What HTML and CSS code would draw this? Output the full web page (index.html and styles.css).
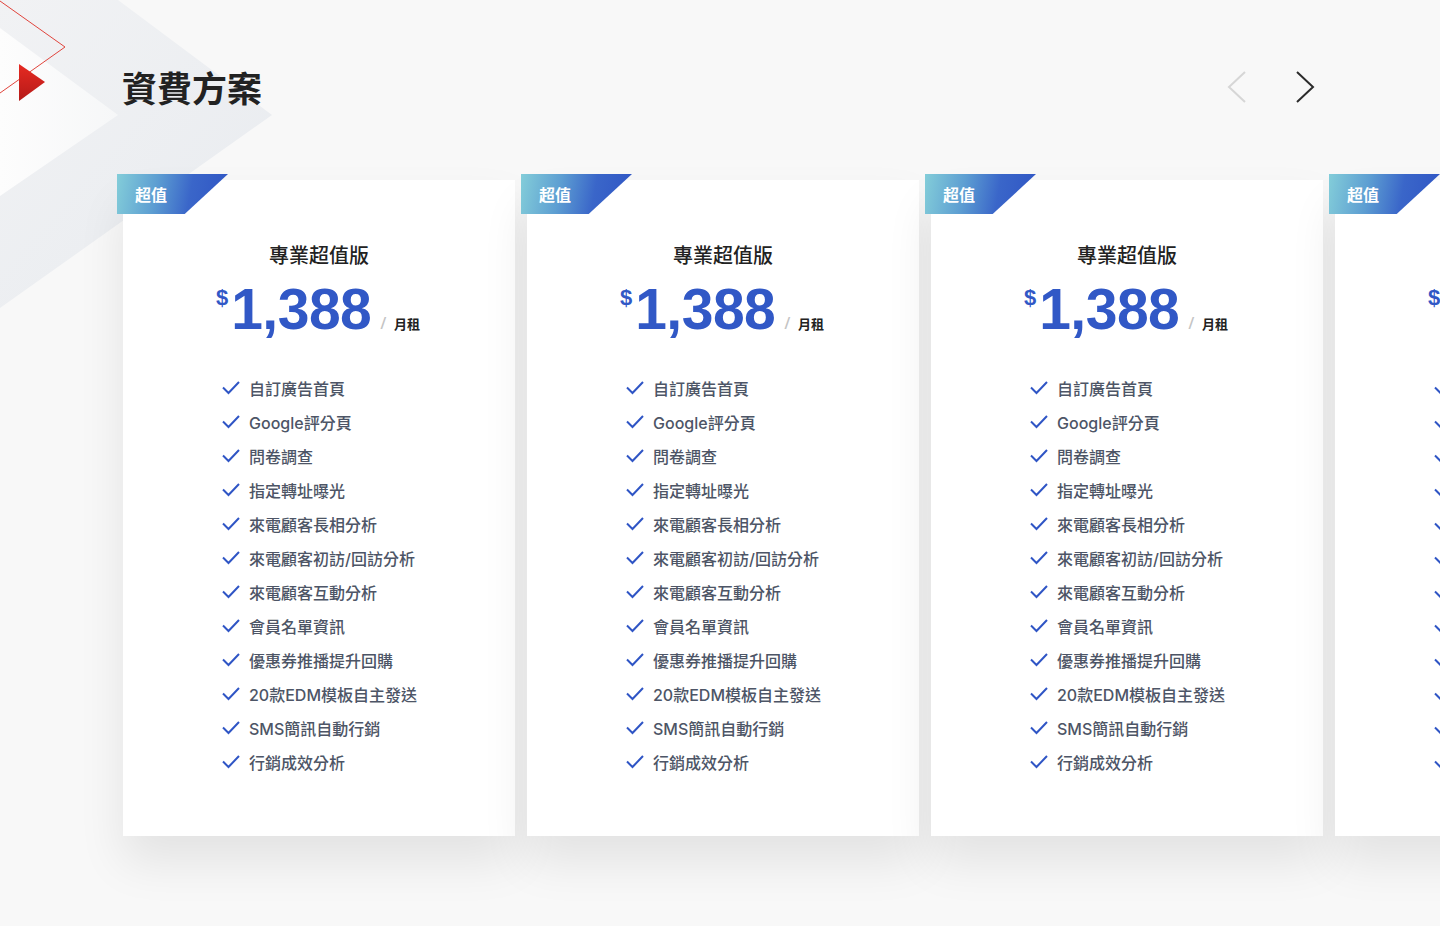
FILE: index.html
```html
<!DOCTYPE html>
<html lang="zh-Hant">
<head>
<meta charset="utf-8">
<title>資費方案</title>
<link rel="stylesheet" href="styles.css">
</head>
<body>
<svg class="deco" width="300" height="320" viewBox="0 0 300 320" aria-hidden="true">
  <defs>
    <linearGradient id="gBig" x1="0" y1="0" x2="1" y2="1">
      <stop offset="0" stop-color="#f1f2f4"/>
      <stop offset="1" stop-color="#e8ebef"/>
    </linearGradient>
    <linearGradient id="gIn" x1="0" y1="0" x2="1" y2="0">
      <stop offset="0" stop-color="#fdfdfd"/>
      <stop offset="1" stop-color="#f6f7f8"/>
    </linearGradient>
    <linearGradient id="gRed" x1="0" y1="0" x2="0" y2="1">
      <stop offset="0" stop-color="#e62a22"/>
      <stop offset="1" stop-color="#b51a18"/>
    </linearGradient>
  </defs>
  <polygon points="0,0 118,0 272,115 0,308" fill="url(#gBig)"/>
  <polygon points="0,28 118,115 0,196" fill="url(#gIn)"/>
  <polyline points="0,1 65,47 0,93" fill="none" stroke="#e0443c" stroke-width="1"/>
  <polygon points="19,64 45,82 19,101" fill="url(#gRed)"/>
</svg>

<main class="page">
  <header class="head">
    <h1 class="head-title">資費方案</h1>
    <nav class="head-nav">
      <button class="nav-btn nav-prev" aria-label="上一頁">
        <svg width="20" height="32" viewBox="0 0 20 32"><polyline points="18,1 2,16 18,31" fill="none" stroke="#d6d6d6" stroke-width="2"/></svg>
      </button>
      <button class="nav-btn nav-next" aria-label="下一頁">
        <svg width="20" height="32" viewBox="0 0 20 32"><polyline points="2,1 18,16 2,31" fill="none" stroke="#2b2b2b" stroke-width="2"/></svg>
      </button>
    </nav>
  </header>

  <section class="cards">
    <article class="card">
      <span class="badge">超值</span>
      <h2 class="card-title">專業超值版</h2>
      <div class="price"><span class="cur">$</span><span class="amt">1,388</span><span class="sep">/</span><span class="unit">月租</span></div>
      <ul class="feat">
        <li><svg class="chk" viewBox="0 0 18 14"><polyline points="1,6.5 6.5,12 17,1"/></svg>自訂廣告首頁</li>
        <li><svg class="chk" viewBox="0 0 18 14"><polyline points="1,6.5 6.5,12 17,1"/></svg>Google評分頁</li>
        <li><svg class="chk" viewBox="0 0 18 14"><polyline points="1,6.5 6.5,12 17,1"/></svg>問卷調查</li>
        <li><svg class="chk" viewBox="0 0 18 14"><polyline points="1,6.5 6.5,12 17,1"/></svg>指定轉址曝光</li>
        <li><svg class="chk" viewBox="0 0 18 14"><polyline points="1,6.5 6.5,12 17,1"/></svg>來電顧客長相分析</li>
        <li><svg class="chk" viewBox="0 0 18 14"><polyline points="1,6.5 6.5,12 17,1"/></svg>來電顧客初訪/回訪分析</li>
        <li><svg class="chk" viewBox="0 0 18 14"><polyline points="1,6.5 6.5,12 17,1"/></svg>來電顧客互動分析</li>
        <li><svg class="chk" viewBox="0 0 18 14"><polyline points="1,6.5 6.5,12 17,1"/></svg>會員名單資訊</li>
        <li><svg class="chk" viewBox="0 0 18 14"><polyline points="1,6.5 6.5,12 17,1"/></svg>優惠券推播提升回購</li>
        <li><svg class="chk" viewBox="0 0 18 14"><polyline points="1,6.5 6.5,12 17,1"/></svg>20款EDM模板自主發送</li>
        <li><svg class="chk" viewBox="0 0 18 14"><polyline points="1,6.5 6.5,12 17,1"/></svg>SMS簡訊自動行銷</li>
        <li><svg class="chk" viewBox="0 0 18 14"><polyline points="1,6.5 6.5,12 17,1"/></svg>行銷成效分析</li>
      </ul>
    </article>
    <article class="card">
      <span class="badge">超值</span>
      <h2 class="card-title">專業超值版</h2>
      <div class="price"><span class="cur">$</span><span class="amt">1,388</span><span class="sep">/</span><span class="unit">月租</span></div>
      <ul class="feat">
        <li><svg class="chk" viewBox="0 0 18 14"><polyline points="1,6.5 6.5,12 17,1"/></svg>自訂廣告首頁</li>
        <li><svg class="chk" viewBox="0 0 18 14"><polyline points="1,6.5 6.5,12 17,1"/></svg>Google評分頁</li>
        <li><svg class="chk" viewBox="0 0 18 14"><polyline points="1,6.5 6.5,12 17,1"/></svg>問卷調查</li>
        <li><svg class="chk" viewBox="0 0 18 14"><polyline points="1,6.5 6.5,12 17,1"/></svg>指定轉址曝光</li>
        <li><svg class="chk" viewBox="0 0 18 14"><polyline points="1,6.5 6.5,12 17,1"/></svg>來電顧客長相分析</li>
        <li><svg class="chk" viewBox="0 0 18 14"><polyline points="1,6.5 6.5,12 17,1"/></svg>來電顧客初訪/回訪分析</li>
        <li><svg class="chk" viewBox="0 0 18 14"><polyline points="1,6.5 6.5,12 17,1"/></svg>來電顧客互動分析</li>
        <li><svg class="chk" viewBox="0 0 18 14"><polyline points="1,6.5 6.5,12 17,1"/></svg>會員名單資訊</li>
        <li><svg class="chk" viewBox="0 0 18 14"><polyline points="1,6.5 6.5,12 17,1"/></svg>優惠券推播提升回購</li>
        <li><svg class="chk" viewBox="0 0 18 14"><polyline points="1,6.5 6.5,12 17,1"/></svg>20款EDM模板自主發送</li>
        <li><svg class="chk" viewBox="0 0 18 14"><polyline points="1,6.5 6.5,12 17,1"/></svg>SMS簡訊自動行銷</li>
        <li><svg class="chk" viewBox="0 0 18 14"><polyline points="1,6.5 6.5,12 17,1"/></svg>行銷成效分析</li>
      </ul>
    </article>
    <article class="card">
      <span class="badge">超值</span>
      <h2 class="card-title">專業超值版</h2>
      <div class="price"><span class="cur">$</span><span class="amt">1,388</span><span class="sep">/</span><span class="unit">月租</span></div>
      <ul class="feat">
        <li><svg class="chk" viewBox="0 0 18 14"><polyline points="1,6.5 6.5,12 17,1"/></svg>自訂廣告首頁</li>
        <li><svg class="chk" viewBox="0 0 18 14"><polyline points="1,6.5 6.5,12 17,1"/></svg>Google評分頁</li>
        <li><svg class="chk" viewBox="0 0 18 14"><polyline points="1,6.5 6.5,12 17,1"/></svg>問卷調查</li>
        <li><svg class="chk" viewBox="0 0 18 14"><polyline points="1,6.5 6.5,12 17,1"/></svg>指定轉址曝光</li>
        <li><svg class="chk" viewBox="0 0 18 14"><polyline points="1,6.5 6.5,12 17,1"/></svg>來電顧客長相分析</li>
        <li><svg class="chk" viewBox="0 0 18 14"><polyline points="1,6.5 6.5,12 17,1"/></svg>來電顧客初訪/回訪分析</li>
        <li><svg class="chk" viewBox="0 0 18 14"><polyline points="1,6.5 6.5,12 17,1"/></svg>來電顧客互動分析</li>
        <li><svg class="chk" viewBox="0 0 18 14"><polyline points="1,6.5 6.5,12 17,1"/></svg>會員名單資訊</li>
        <li><svg class="chk" viewBox="0 0 18 14"><polyline points="1,6.5 6.5,12 17,1"/></svg>優惠券推播提升回購</li>
        <li><svg class="chk" viewBox="0 0 18 14"><polyline points="1,6.5 6.5,12 17,1"/></svg>20款EDM模板自主發送</li>
        <li><svg class="chk" viewBox="0 0 18 14"><polyline points="1,6.5 6.5,12 17,1"/></svg>SMS簡訊自動行銷</li>
        <li><svg class="chk" viewBox="0 0 18 14"><polyline points="1,6.5 6.5,12 17,1"/></svg>行銷成效分析</li>
      </ul>
    </article>
    <article class="card">
      <span class="badge">超值</span>
      <h2 class="card-title">專業超值版</h2>
      <div class="price"><span class="cur">$</span><span class="amt">1,388</span><span class="sep">/</span><span class="unit">月租</span></div>
      <ul class="feat">
        <li><svg class="chk" viewBox="0 0 18 14"><polyline points="1,6.5 6.5,12 17,1"/></svg>自訂廣告首頁</li>
        <li><svg class="chk" viewBox="0 0 18 14"><polyline points="1,6.5 6.5,12 17,1"/></svg>Google評分頁</li>
        <li><svg class="chk" viewBox="0 0 18 14"><polyline points="1,6.5 6.5,12 17,1"/></svg>問卷調查</li>
        <li><svg class="chk" viewBox="0 0 18 14"><polyline points="1,6.5 6.5,12 17,1"/></svg>指定轉址曝光</li>
        <li><svg class="chk" viewBox="0 0 18 14"><polyline points="1,6.5 6.5,12 17,1"/></svg>來電顧客長相分析</li>
        <li><svg class="chk" viewBox="0 0 18 14"><polyline points="1,6.5 6.5,12 17,1"/></svg>來電顧客初訪/回訪分析</li>
        <li><svg class="chk" viewBox="0 0 18 14"><polyline points="1,6.5 6.5,12 17,1"/></svg>來電顧客互動分析</li>
        <li><svg class="chk" viewBox="0 0 18 14"><polyline points="1,6.5 6.5,12 17,1"/></svg>會員名單資訊</li>
        <li><svg class="chk" viewBox="0 0 18 14"><polyline points="1,6.5 6.5,12 17,1"/></svg>優惠券推播提升回購</li>
        <li><svg class="chk" viewBox="0 0 18 14"><polyline points="1,6.5 6.5,12 17,1"/></svg>20款EDM模板自主發送</li>
        <li><svg class="chk" viewBox="0 0 18 14"><polyline points="1,6.5 6.5,12 17,1"/></svg>SMS簡訊自動行銷</li>
        <li><svg class="chk" viewBox="0 0 18 14"><polyline points="1,6.5 6.5,12 17,1"/></svg>行銷成效分析</li>
      </ul>
    </article>
  </section>
</main>
</body>
</html>
```
FILE: styles.css
```css
* { box-sizing: border-box; }

html, body {
  margin: 0;
  padding: 0;
  width: 1440px;
  height: 926px;
  overflow: hidden;
  background: #f8f8f8;
  font-family: "Liberation Sans", "Noto Sans CJK TC", sans-serif;
  color: #222;
}

.deco {
  position: absolute;
  left: 0;
  top: 0;
  z-index: 0;
}

.page {
  position: relative;
  z-index: 1;
}

.head {
  display: flex;
  align-items: center;
  justify-content: space-between;
  padding: 62px 125px 0 122px;
}

.head-title {
  margin: 0;
  font-family: "Noto Sans CJK TC", sans-serif;
  font-size: 35px;
  line-height: 49px;
  font-weight: 700;
  color: #222;
}

.head-nav {
  display: flex;
  gap: 48px;
  align-items: center;
}

.nav-btn {
  border: 0;
  background: none;
  padding: 0;
  width: 20px;
  height: 32px;
  display: block;
  cursor: pointer;
}
.nav-btn svg { display: block; }

.cards {
  display: flex;
  gap: 12px;
  margin-top: 69px;
  padding-left: 123px;
}

.card {
  position: relative;
  flex: 0 0 392px;
  height: 656px;
  background: #fff;
  padding-top: 61px;
  box-shadow: 0 26px 44px rgba(0, 0, 0, 0.085);
}

.badge {
  position: absolute;
  left: -6px;
  top: -6px;
  width: 111px;
  height: 40px;
  padding-left: 18px;
  font-family: "Noto Sans CJK TC", sans-serif;
  font-size: 16px;
  font-weight: 700;
  line-height: 40px;
  color: #fff;
  background: linear-gradient(100deg, #83cdd9 0%, #5d9ed2 35%, #3a66c9 65%, #2f55c4 100%);
  clip-path: polygon(0 0, 100% 0, 61% 100%, 0 100%);
}

.card-title {
  margin: 0;
  text-align: center;
  font-family: "Noto Sans CJK TC", sans-serif;
  font-size: 20px;
  line-height: 28px;
  font-weight: 500;
  color: #222;
}

.price {
  display: flex;
  justify-content: center;
  align-items: baseline;
  height: 58px;
  margin-top: 12px;
  color: #3158c6;
  padding-right: 2px;
}

.cur {
  align-self: flex-start;
  margin-top: 6px;
  margin-right: 3px;
  font-size: 22px;
  line-height: 22px;
  font-weight: 700;
}

.amt {
  font-size: 57px;
  line-height: 57px;
  font-weight: 700;
  letter-spacing: -0.5px;
}

.sep {
  margin-left: 10px;
  font-size: 17px;
  font-weight: 300;
  color: #c4c4c4;
  transform: scaleX(1.2);
}

.unit {
  margin-left: 8px;
  font-family: "Noto Sans CJK TC", sans-serif;
  font-size: 13px;
  font-weight: 700;
  color: #222;
}

.feat {
  list-style: none;
  margin: 32px 0 0;
  padding: 0 0 0 99px;
}

.feat li {
  display: flex;
  align-items: center;
  height: 34px;
  font-family: "Inter", "Noto Sans CJK TC", sans-serif;
  font-size: 16px;
  font-weight: 500;
  color: #4d5566;
  white-space: nowrap;
}

.chk {
  flex: 0 0 18px;
  width: 18px;
  height: 14px;
  margin-right: 9px;
  fill: none;
  stroke: #2f55c5;
  stroke-width: 2;
}
```
